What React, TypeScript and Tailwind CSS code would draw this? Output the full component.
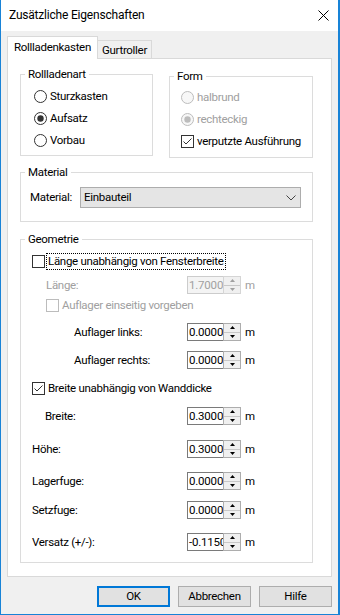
import React from "react";

function Radio({ checked, disabled }: { checked?: boolean; disabled?: boolean }) {
  const c = disabled ? "#bcbcbc" : "#333333";
  return (
    <svg width="13" height="13" viewBox="0 0 13 13" className="shrink-0">
      <circle cx="6.5" cy="6.5" r="6" fill={disabled ? "#f7f7f7" : "#ffffff"} stroke={c} strokeWidth="1" />
      {checked && <circle cx="6.5" cy="6.5" r="3.2" fill={c} />}
    </svg>
  );
}

function Check({ checked, disabled }: { checked?: boolean; disabled?: boolean }) {
  const c = disabled ? "#bcbcbc" : "#333333";
  return (
    <svg width="13" height="13" viewBox="0 0 13 13" className="shrink-0">
      <rect x="0.5" y="0.5" width="12" height="12" fill="#ffffff" stroke={c} strokeWidth="1" />
      {checked && <polyline points="2.5,6.5 5,9 10.5,3.5" fill="none" stroke={c} strokeWidth="1" />}
    </svg>
  );
}

function Spin({ value, disabled }: { value: string; disabled?: boolean }) {
  const arrow = disabled ? "#a0a0a0" : "#000000";
  return (
    <div className="flex h-[18px] w-[54px] shrink-0">
      <div
        className={`w-[36px] overflow-hidden whitespace-nowrap border-y border-l pl-[1px] leading-[16px] tracking-[-0.2px] ${
          disabled ? "border-[#cccccc] bg-[#f4f4f4] text-[#a0a0a0]" : "border-[#7a7a7a] bg-white text-black"
        }`}
      >
        {value}
      </div>
      <div className={`flex w-[18px] flex-col border ${disabled ? "border-[#d5d5d5]" : "border-[#adadad]"}`}>
        <div className="flex flex-1 items-center justify-center border-b border-[#c8c8c8] bg-[#f0f0f0]">
          <svg width="5" height="3" viewBox="0 0 5 3">
            <polygon points="2.5,0 5,3 0,3" fill={arrow} />
          </svg>
        </div>
        <div className="flex flex-1 items-center justify-center bg-[#f0f0f0]">
          <svg width="5" height="3" viewBox="0 0 5 3">
            <polygon points="0,0 5,0 2.5,3" fill={arrow} />
          </svg>
        </div>
      </div>
    </div>
  );
}

function SpinRow({
  label,
  value,
  pl,
  mt,
  disabled,
}: {
  label: string;
  value: string;
  pl: string;
  mt: string;
  disabled?: boolean;
}) {
  return (
    <div className={`flex h-[18px] items-center ${mt}`}>
      <div className={`w-[166px] shrink-0 ${pl} ${disabled ? "text-[#a0a0a0]" : "text-black"}`}>{label}</div>
      <Spin value={value} disabled={disabled} />
      <span className={`ml-[4px] ${disabled ? "text-[#a0a0a0]" : "text-black"}`}>m</span>
    </div>
  );
}

function Legend({ children }: { children: React.ReactNode }) {
  return <legend className="ml-[4px] px-[3px] leading-[15px]">{children}</legend>;
}

export default function App() {
  return (
    <div className="flex h-[615px] w-[340px] flex-col border-b border-l border-r-2 border-[#1883d7] bg-[#f0f0f0] font-['Roboto',sans-serif] text-[11.5px] leading-[15px] tracking-[-0.3px] text-black">
      {/* Title bar */}
      <div className="flex h-[31px] shrink-0 items-center justify-between bg-white pl-[8px] pr-[9px]">
        <span className="text-[12px] tracking-[-0.2px]">Zusätzliche Eigenschaften</span>
        <svg width="11" height="11" viewBox="0 0 11 11">
          <line x1="0.5" y1="0.5" x2="10.5" y2="10.5" stroke="#000" strokeWidth="1" />
          <line x1="10.5" y1="0.5" x2="0.5" y2="10.5" stroke="#000" strokeWidth="1" />
        </svg>
      </div>

      {/* Body */}
      <div className="flex flex-1 flex-col pl-[6px] pt-[5px]">
        {/* Tabs */}
        <div className="flex h-[22px] items-end">
          <div className="relative z-10 mb-[-1px] flex h-[23px] w-[91px] justify-center border-x border-t border-[#d9d9d9] bg-white pt-[3px]">
            Rollladenkasten
          </div>
          <div className="ml-[-1px] flex h-[18px] w-[55px] justify-center border-x border-t border-[#d9d9d9] bg-[#f0f0f0] pt-[2px]">
            Gurtroller
          </div>
        </div>

        {/* Panel */}
        <div className="flex h-[519px] w-[325px] flex-col border border-[#d9d9d9] bg-white pl-[12px] pt-[8px]">
          {/* Row 1 */}
          <div className="flex items-start">
            <fieldset className="h-[89px] w-[133px] border border-[#dcdcdc]">
              <Legend>Rollladenart</Legend>
              <div className="mt-[3px] flex flex-col pl-[13px]">
                <div className="flex h-[22px] items-center gap-[3px]">
                  <Radio />
                  <span>Sturzkasten</span>
                </div>
                <div className="flex h-[22px] items-center gap-[3px]">
                  <Radio checked />
                  <span>Aufsatz</span>
                </div>
                <div className="flex h-[22px] items-center gap-[3px]">
                  <Radio />
                  <span>Vorbau</span>
                </div>
              </div>
            </fieldset>
            <fieldset className="ml-[16px] mt-[2px] h-[89px] w-[144px] border border-[#dcdcdc]">
              <Legend>Form</Legend>
              <div className="mt-[2px] flex flex-col pl-[11px]">
                <div className="flex h-[22px] items-center gap-[3px] text-[#a0a0a0]">
                  <Radio disabled />
                  <span>halbrund</span>
                </div>
                <div className="flex h-[22px] items-center gap-[3px] text-[#a0a0a0]">
                  <Radio checked disabled />
                  <span>rechteckig</span>
                </div>
                <div className="flex h-[22px] items-center gap-[3px]">
                  <Check checked />
                  <span>verputzte Ausführung</span>
                </div>
              </div>
            </fieldset>
          </div>

          {/* Material */}
          <fieldset className="mt-[7px] h-[57px] w-[293px] border border-[#dcdcdc]">
            <Legend>Material</Legend>
            <div className="mt-[7px] flex h-[21px] items-center pl-[9px]">
              <span className="w-[50px] shrink-0">Material:</span>
              <div className="flex h-[21px] w-[221px] items-center justify-between border border-[#adadad] bg-[#e5e5e5] pl-[3px] pr-[4px]">
                <span>Einbauteil</span>
                <svg width="10" height="6" viewBox="0 0 10 6">
                  <polyline points="0.5,0.5 5,5 9.5,0.5" fill="none" stroke="#444" strokeWidth="1" />
                </svg>
              </div>
            </div>
          </fieldset>

          {/* Geometrie */}
          <fieldset className="mt-[10px] h-[331px] w-[293px] border border-[#dcdcdc]">
            <Legend>Geometrie</Legend>
            <div className="flex flex-col">
              <div className="mt-[6px] flex h-[17px] items-center pl-[11px]">
                <Check />
                <span className="ml-[2px] px-[1px] leading-[15px] outline outline-1 outline-dotted outline-offset-0 outline-black">
                  Länge unabhängig von Fensterbreite
                </span>
              </div>
              <SpinRow label="Länge:" value="1.7000" pl="pl-[25px]" mt="mt-[6px]" disabled />
              <div className="mt-[5px] flex h-[13px] items-center gap-[3px] pl-[25px] text-[#a0a0a0]">
                <Check disabled />
                <span>Auflager einseitig vorgeben</span>
              </div>
              <SpinRow label="Auflager links:" value="0.0000" pl="pl-[53px]" mt="mt-[11px]" />
              <SpinRow label="Auflager rechts:" value="0.0000" pl="pl-[53px]" mt="mt-[10px]" />
              <div className="mt-[13px] flex h-[13px] items-center gap-[3px] pl-[11px]">
                <Check checked />
                <span>Breite unabhängig von Wanddicke</span>
              </div>
              <SpinRow label="Breite:" value="0.3000" pl="pl-[24px]" mt="mt-[12px]" />
              <SpinRow label="Höhe:" value="0.3000" pl="pl-[11px]" mt="mt-[15px]" />
              <SpinRow label="Lagerfuge:" value="0.0000" pl="pl-[11px]" mt="mt-[14px]" />
              <SpinRow label="Setzfuge:" value="0.0000" pl="pl-[11px]" mt="mt-[11px]" />
              <SpinRow label="Versatz (+/-):" value="-0.1150" pl="pl-[11px]" mt="mt-[14px]" />
            </div>
          </fieldset>
        </div>

        {/* Buttons */}
        <div className="mt-[9px] flex justify-end gap-[8px] pr-[6px]">
          <button className="flex h-[21px] w-[73px] items-center justify-center border-2 border-[#0078d7] bg-[#e1e1e1]">
            OK
          </button>
          <button className="flex h-[21px] w-[73px] items-center justify-center border border-[#adadad] bg-[#e1e1e1]">
            Abbrechen
          </button>
          <button className="flex h-[21px] w-[73px] items-center justify-center border border-[#adadad] bg-[#e1e1e1]">
            Hilfe
          </button>
        </div>
      </div>
    </div>
  );
}
